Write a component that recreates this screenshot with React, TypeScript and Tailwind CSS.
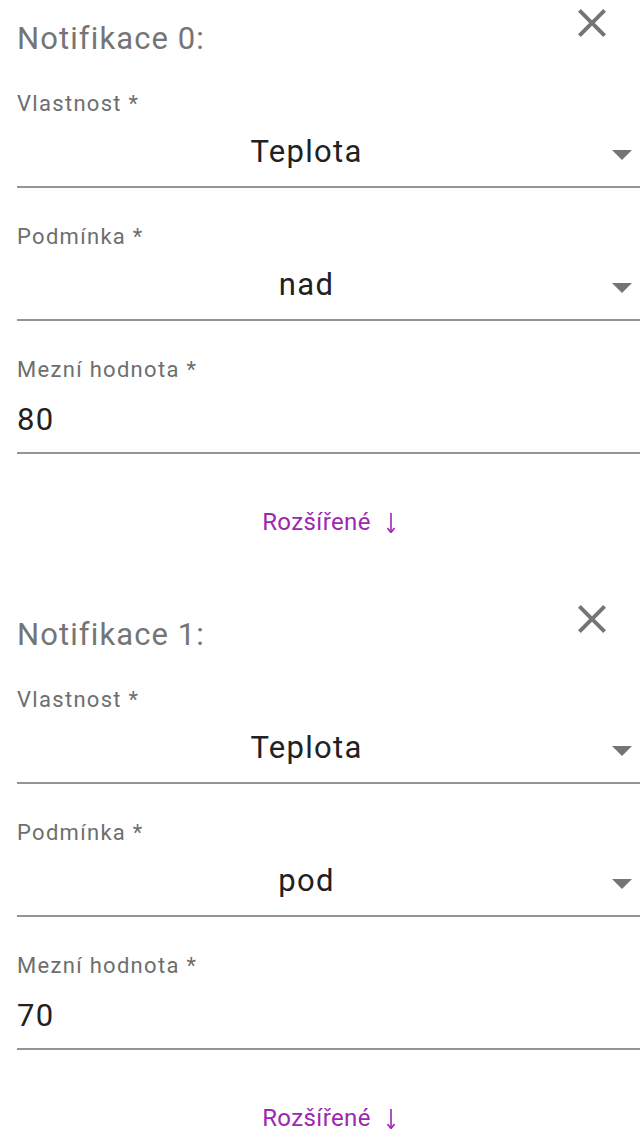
import React from "react";

function CloseIcon() {
  return (
    <svg width="48" height="48" viewBox="0 0 24 24" className="block">
      <path
        fill="#757575"
        d="M19 6.41L17.59 5 12 10.59 6.41 5 5 6.41 10.59 12 5 17.59 6.41 19 12 13.41 17.59 19 19 17.59 13.41 12z"
      />
    </svg>
  );
}

function DropArrow() {
  return (
    <svg width="20" height="10" viewBox="0 0 20 10" className="block mt-[6px] ml-[16px] mr-[8px] shrink-0">
      <path d="M0 0 L20 0 L10 10 Z" fill="#757575" />
    </svg>
  );
}

function DownArrow() {
  return (
    <svg width="8" height="20" viewBox="0 0 8 20" className="inline-block ml-[16px] mt-[2px]">
      <path d="M4 0 V19" stroke="#9c27b0" strokeWidth="1.6" fill="none" />
      <path d="M0.5 15 L4 19.5 L7.5 15" stroke="#9c27b0" strokeWidth="1.6" fill="none" strokeLinejoin="miter" />
    </svg>
  );
}

function SelectField({ label, value }: { label: string; value: string }) {
  return (
    <div className="h-[133px] border-b-2 border-[#949494] flex flex-col">
      <div className="pt-[36px] text-[22px] leading-[26px] tracking-[1.3px] text-[#6e6e6e]">{label}</div>
      <div className="mt-[17px] flex items-center h-[36px]">
        <div className="flex-1 text-center text-[31px] leading-[36px] tracking-[1.3px] text-[#212121]">{value}</div>
        <DropArrow />
      </div>
    </div>
  );
}

function TextField({ label, value }: { label: string; value: string }) {
  return (
    <div className="h-[133px] border-b-2 border-[#949494] flex flex-col">
      <div className="pt-[36px] text-[22px] leading-[26px] tracking-[1.3px] text-[#6e6e6e]">{label}</div>
      <div className="mt-[19px] h-[36px] text-[31px] leading-[36px] tracking-[1.3px] text-[#212121]">{value}</div>
    </div>
  );
}

function NotificationBlock({ index, condition, threshold }: { index: number; condition: string; threshold: string }) {
  return (
    <div className="pl-[17px] h-[596px] flex flex-col">
      <div className="h-[55px] flex items-start justify-between">
        <div className="mt-[24px] text-[31px] leading-[30px] tracking-[1.1px] text-[#757575]">Notifikace {index}:</div>
        <button className="mt-[-1px] mr-[24px] w-12 h-12">
          <CloseIcon />
        </button>
      </div>
      <SelectField label="Vlastnost *" value="Teplota" />
      <SelectField label="Podmínka *" value={condition} />
      <TextField label="Mezní hodnota *" value={threshold} />
      <div className="mt-[54px] h-[28px] flex justify-center items-center text-[24px] leading-[28px] tracking-[0.4px] text-[#9c27b0]">
        <span>Rozšířené</span>
        <DownArrow />
      </div>
    </div>
  );
}

export default function App() {
  return (
    <div className="w-[640px] h-[1136px] overflow-hidden bg-white" style={{ fontFamily: "Roboto, 'Noto Sans', sans-serif" }}>
      <NotificationBlock index={0} condition="nad" threshold="80" />
      <NotificationBlock index={1} condition="pod" threshold="70" />
    </div>
  );
}
